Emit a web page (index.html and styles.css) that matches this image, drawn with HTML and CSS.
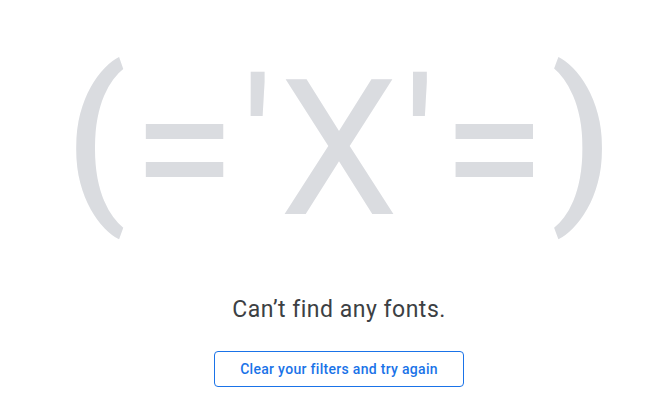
FILE: index.html
```html
<!DOCTYPE html>
<html lang="en">
<head>
  <meta charset="UTF-8" />
  <meta name="viewport" content="width=device-width, initial-scale=1.0"/>
  <title>No fonts</title>
  <link rel="stylesheet" href="styles.css">
</head>
<body>

  <div class="empty">
    <div class="face"><span class="paren">(</span>='X'=<span class="paren">)</span></div>
    <p class="message">Can’t find any fonts.</p>
    <button class="clear-btn">Clear your filters and try again</button>
  </div>

</body>
</html>
```

FILE: styles.css
```css
body {
  font-family: Roboto, Arial, sans-serif;
  margin: 0;
  padding: 0;
  background: #ffffff;
}

.empty {
  display: flex;
  flex-direction: column;
  align-items: center;
  padding: 36px 0 0 7px;
}

.face {
  font-family: Roboto, Arial, sans-serif;
  font-size: 190px;
  line-height: 226px;
  letter-spacing: 5px;
  padding-left: 5px;
  color: #dadce0;
  white-space: nowrap;
}

.paren {
  font-size: 178px;
  font-weight: 500;
  line-height: 0;
  vertical-align: 15px;
}

.message {
  font-size: 23px;
  letter-spacing: 0.5px;
  color: #3c4043;
  margin: 34px 0 0;
  line-height: 28px;
}

.clear-btn {
  margin-top: 27px;
  font-family: Roboto, Arial, sans-serif;
  font-size: 14px;
  font-weight: 500;
  color: #1a73e8;
  background: #fff;
  border: 1px solid #1a73e8;
  border-radius: 4px;
  width: 250px;
  height: 36px;
  letter-spacing: 0.3px;
  cursor: pointer;
}
```
